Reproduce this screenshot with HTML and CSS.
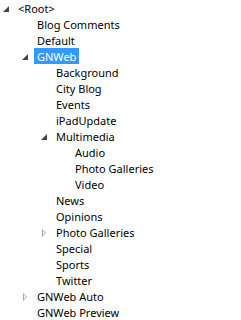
FILE: index.html
```html
<!DOCTYPE html>
<html lang="en">

<head>
    <meta charset="UTF-8">
    <title>Site Tree</title>
    <link rel="stylesheet" href="styles.css">
</head>

<body>
    <ul class="tree">
        <li>
            <div class="row"><span class="exp open"></span><span class="label">&lt;Root&gt;</span></div>
            <ul>
                <li><div class="row"><span class="exp"></span><span class="label">Blog Comments</span></div></li>
                <li><div class="row"><span class="exp"></span><span class="label">Default</span></div></li>
                <li>
                    <div class="row"><span class="exp open"></span><span class="label selected">GNWeb</span></div>
                    <ul>
                        <li><div class="row"><span class="exp"></span><span class="label">Background</span></div></li>
                        <li><div class="row"><span class="exp"></span><span class="label">City Blog</span></div></li>
                        <li><div class="row"><span class="exp"></span><span class="label">Events</span></div></li>
                        <li><div class="row"><span class="exp"></span><span class="label">iPadUpdate</span></div></li>
                        <li>
                            <div class="row"><span class="exp open"></span><span class="label">Multimedia</span></div>
                            <ul>
                                <li><div class="row"><span class="exp"></span><span class="label">Audio</span></div></li>
                                <li><div class="row"><span class="exp"></span><span class="label">Photo Galleries</span></div></li>
                                <li><div class="row"><span class="exp"></span><span class="label">Video</span></div></li>
                            </ul>
                        </li>
                        <li><div class="row"><span class="exp"></span><span class="label">News</span></div></li>
                        <li><div class="row"><span class="exp"></span><span class="label">Opinions</span></div></li>
                        <li><div class="row"><span class="exp closed"></span><span class="label">Photo Galleries</span></div></li>
                        <li><div class="row"><span class="exp"></span><span class="label">Special</span></div></li>
                        <li><div class="row"><span class="exp"></span><span class="label">Sports</span></div></li>
                        <li><div class="row"><span class="exp"></span><span class="label">Twitter</span></div></li>
                    </ul>
                </li>
                <li><div class="row"><span class="exp closed"></span><span class="label">GNWeb Auto</span></div></li>
                <li><div class="row"><span class="exp"></span><span class="label">GNWeb Preview</span></div></li>
            </ul>
        </li>
    </ul>
</body>

</html>
```
FILE: styles.css
```css
body {
    font-family: "Noto Sans", "Open Sans", sans-serif;
    font-size: 11px;
    color: #000;
    background-color: #fff;
    margin: 0;
}

.tree,
.tree ul {
    list-style: none;
    margin: 0;
    padding: 0;
}

.tree ul {
    padding-left: 19px;
}

.row {
    display: flex;
    align-items: flex-start;
    height: 16px;
}

.exp {
    width: 15px;
    height: 16px;
    flex-shrink: 0;
    position: relative;
}

/* expanded: small filled corner triangle */
.exp.open::before {
    content: '';
    position: absolute;
    left: 3px;
    top: 6px;
    width: 0;
    height: 0;
    border-left: 6px solid transparent;
    border-bottom: 6px solid #444;
}

/* collapsed: hollow triangle pointing right */
.exp.closed::before {
    content: '';
    position: absolute;
    left: 4px;
    top: 5px;
    width: 0;
    height: 0;
    border-top: 4px solid transparent;
    border-bottom: 4px solid transparent;
    border-left: 4px solid #a6a6a6;
}

.exp.closed::after {
    content: '';
    position: absolute;
    left: 5px;
    top: 7px;
    width: 0;
    height: 0;
    border-top: 2px solid transparent;
    border-bottom: 2px solid transparent;
    border-left: 2px solid #fff;
}

.label {
    padding: 0 3px;
    height: 16px;
    line-height: 18px;
    white-space: nowrap;
}

.label.selected {
    background-color: #3399ff;
    color: #fff;
}
```
